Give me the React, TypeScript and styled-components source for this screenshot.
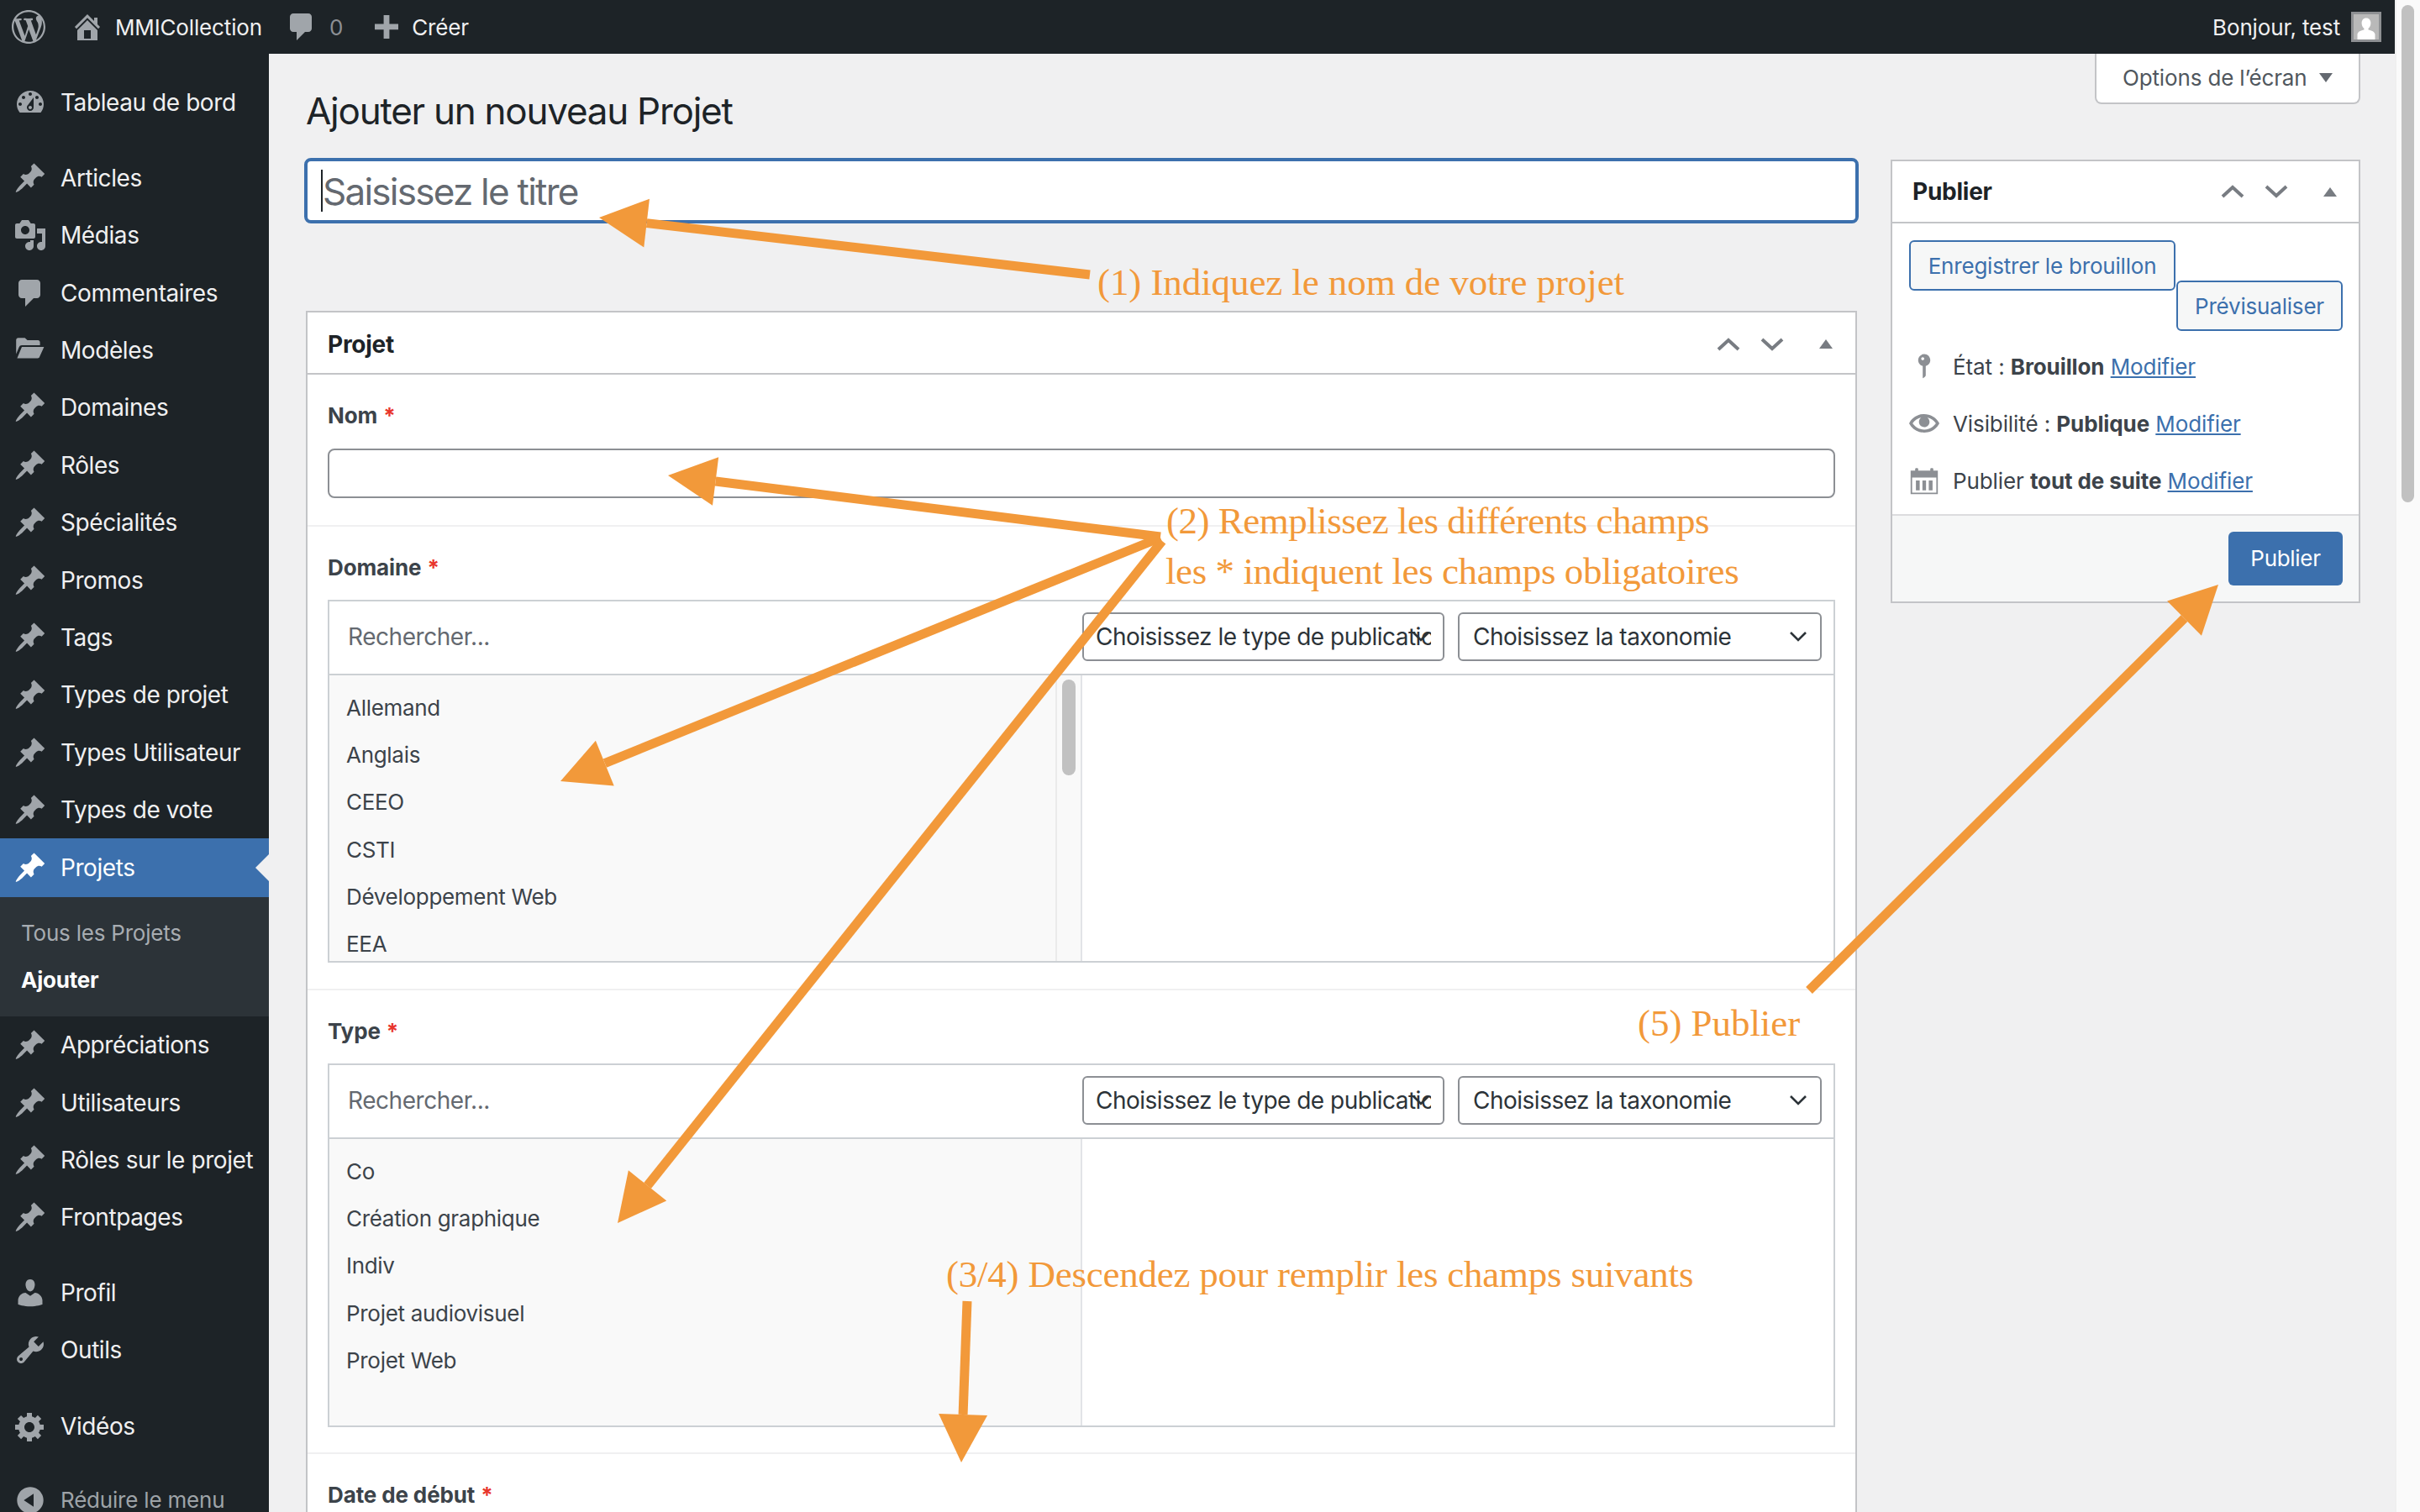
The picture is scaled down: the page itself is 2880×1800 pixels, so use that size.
import React from 'react';
import styled, { createGlobalStyle } from 'styled-components';

const ORANGE = '#f2993a';
const BLUE = '#3c70ad';
const SANS = '"Inter", "Liberation Sans", sans-serif';

const Global = createGlobalStyle`
  html, body { margin: 0; padding: 0; width: 2880px; height: 1800px; overflow: hidden; background: #f0f0f1; }
  body { font-family: ${SANS}; }
  * { box-sizing: border-box; }
`;

const P = {
  wp: 'M20 10c0-5.51-4.49-10-10-10C4.48 0 0 4.49 0 10c0 5.52 4.48 10 10 10 5.51 0 10-4.48 10-10zM7.78 15.37L4.37 6.22c.55-.02 1.17-.08 1.17-.08.5-.06.44-1.13-.06-1.11 0 0-1.45.11-2.37.11-.18 0-.37 0-.58-.01C4.12 2.69 6.87 1.11 10 1.11c2.33 0 4.45.87 6.05 2.34-.68-.11-1.65.39-1.65 1.58 0 .74.45 1.36.9 2.1.35.61.55 1.36.55 2.46 0 1.49-1.4 5-1.4 5l-3.03-8.37c.54-.02.82-.17.82-.17.5-.05.44-1.25-.06-1.22 0 0-1.44.12-2.38.12-.87 0-2.33-.12-2.33-.12-.5-.03-.56 1.2-.06 1.22l.92.08 1.26 3.41zM17.41 10c.24-.64.74-1.87.43-4.25.7 1.29 1.05 2.71 1.05 4.25 0 3.29-1.73 6.24-4.4 7.78.97-2.59 1.94-5.2 2.92-7.78zM6.1 18.09C3.12 16.65 1.11 13.53 1.11 10c0-1.3.23-2.48.72-3.59C3.25 10.3 4.67 14.2 6.1 18.09zm4.03-6.63l2.58 6.98c-.86.29-1.76.45-2.71.45-.79 0-1.57-.11-2.29-.33.81-2.38 1.62-4.74 2.42-7.1z',
  home: 'M16 8.5l1.53 1.53-1.06 1.06L10 4.62l-6.47 6.47-1.06-1.06L10 2.5l4 4v-2h2v4zm-6-2.46l6 5.99V18H4v-5.97zM12 17v-5H8v5h4z',
  comment: 'M5 2h9c1.1 0 2 .9 2 2v7c0 1.1-.9 2-2 2h-2l-5 5v-5H5c-1.1 0-2-.9-2-2V4c0-1.1.9-2 2-2z',
  plus: 'M17 8.2v3.4h-5.3V17H8.3v-5.4H3V8.2h5.3V3h3.4v5.2z',
  dashboard: 'M3.76 16h12.48c1.1-1.37 1.76-3.11 1.76-5 0-4.42-3.58-8-8-8s-8 3.58-8 8c0 1.89.66 3.63 1.76 5zM10 4c.55 0 1 .45 1 1s-.45 1-1 1-1-.45-1-1 .45-1 1-1zM6 6c.55 0 1 .45 1 1s-.45 1-1 1-1-.45-1-1 .45-1 1-1zm8 0c.55 0 1 .45 1 1s-.45 1-1 1-1-.45-1-1 .45-1 1-1zm-5.37 5.55L12 7v6c0 1.1-.9 2-2 2s-2-.9-2-2c0-.57.24-1.08.63-1.45zM4 10c.55 0 1 .45 1 1s-.45 1-1 1-1-.45-1-1 .45-1 1-1zm12 0c.55 0 1 .45 1 1s-.45 1-1 1-1-.45-1-1 .45-1 1-1zm-5 3c0-.55-.45-1-1-1s-1 .45-1 1 .45 1 1 1 1-.45 1-1z',
  pin: 'M10.44 3.02l1.82-1.82 6.36 6.35-1.83 1.82c-1.05-.68-2.48-.57-3.41.36l-.75.75c-.92.93-1.04 2.35-.35 3.41l-1.83 1.82-2.41-2.41-2.8 2.79c-.42.42-3.38 2.71-3.8 2.29s1.86-3.39 2.28-3.81l2.79-2.79L4.1 9.36l1.83-1.82c1.05.69 2.48.57 3.4-.36l.75-.75c.93-.92 1.05-2.35.36-3.41z',
  media: 'M13 11V4c0-.55-.45-1-1-1h-1.67L9 1H5L3.67 3H2c-.55 0-1 .45-1 1v7c0 .55.45 1 1 1h10c.55 0 1-.45 1-1zM7 4.5c1.38 0 2.5 1.12 2.5 2.5S8.38 9.5 7 9.5 4.5 8.38 4.5 7 5.62 4.5 7 4.5zM14 6h5v10.5c0 1.38-1.12 2.5-2.5 2.5S14 17.88 14 16.5s1.12-2.5 2.5-2.5c.17 0 .34.02.5.05V9h-3V6zm-4 8.05V13h2v3.5c0 1.38-1.12 2.5-2.5 2.5S7 17.88 7 16.5 8.12 14 9.5 14c.17 0 .34.02.5.05z',
  folder: 'M1.6 4c0-.8.5-1.4 1.3-1.4h3.9L8.3 4h6.3c.7 0 1.2.5 1.2 1.2V7H5c-.8 0-1.3.4-1.6 1L1.6 12.2zM5 8h13.2l-2.7 6c-.2.5-.6.7-1 .7H2.2z',
  user: 'M10 9.25c-2.27 0-2.73-3.44-2.73-3.44C7 4.02 7.82 2 9.97 2c2.16 0 2.98 2.02 2.71 3.81 0 0-.41 3.44-2.68 3.44zm0 2.57L12.72 10c2.39 0 4.52 2.33 4.52 4.53v2.49s-3.65 1.13-7.24 1.13c-3.65 0-7.24-1.13-7.24-1.13v-2.49c0-2.25 1.94-4.48 4.47-4.48z',
  tools: 'M16.68 9.77c-1.34 1.34-3.3 1.67-4.95.99l-5.41 6.52c-.99.99-2.59.99-3.58 0s-.99-2.59 0-3.57l6.52-5.42c-.68-1.65-.35-3.61.99-4.95 1.28-1.28 3.12-1.62 4.72-1.06l-2.89 2.89 2.82 2.82 2.86-2.87c.53 1.58.18 3.39-1.08 4.65zM3.81 16.21c.4.39 1.04.39 1.43 0 .4-.4.4-1.04 0-1.43-.39-.4-1.03-.4-1.43 0-.39.39-.39 1.03 0 1.43z',
  gear: 'M18 12h-2.18c-.17.7-.44 1.35-.81 1.93l1.54 1.54-2.1 2.1-1.54-1.54c-.58.36-1.23.63-1.91.79V19H8v-2.18c-.68-.16-1.33-.43-1.91-.79l-1.54 1.54-2.12-2.12 1.54-1.54c-.36-.58-.63-1.23-.79-1.91H1V9.03h2.17c.16-.7.44-1.35.8-1.94L2.43 5.55l2.1-2.1 1.54 1.54c.58-.37 1.24-.64 1.93-.81V2h3v2.18c.68.16 1.33.43 1.91.79l1.54-1.54 2.12 2.12-1.54 1.54c.36.59.64 1.24.8 1.94H18V12zm-8.5 1.5c1.66 0 3-1.34 3-3s-1.34-3-3-3-3 1.34-3 3 1.34 3 3 3z',
  collapse: 'M10 2.16c4.33 0 7.84 3.51 7.84 7.84s-3.51 7.84-7.84 7.84S2.16 14.33 2.16 10 5.71 2.16 10 2.16zm2 11.72V6.12L6.18 9.97z',
  key: 'M14 6c0 1.86-1.28 3.41-3 3.86V16c0 1-2 2-2 2V9.86c-1.72-.45-3-2-3-3.86 0-2.21 1.79-4 4-4s4 1.79 4 4zM8 5c0 .55.45 1 1 1s1-.45 1-1-.45-1-1-1-1 .45-1 1z',
  eye: 'M19.7 9.4C17.7 6 14 3.9 10 3.9S2.3 6 .3 9.4L0 10l.3.6c2 3.4 5.7 5.5 9.7 5.5s7.7-2.1 9.7-5.5l.3-.6-.3-.6zM10 14.1c-3.1 0-6-1.6-7.7-4.1C3.6 8 5.7 6.6 8 6.1c-.9.6-1.5 1.7-1.5 2.9 0 1.9 1.6 3.5 3.5 3.5s3.5-1.6 3.5-3.5c0-1.2-.6-2.3-1.5-2.9 2.3.5 4.4 1.9 5.7 3.9-1.7 2.5-4.6 4.1-7.7 4.1z',
  calendar: 'M1 3.5h3V2.2c0-.5 2-.5 2 0v1.3h8V2.2c0-.5 2-.5 2 0v1.3h3V19H1zM2 8v10h16V8zm2.5 2h2.5v6.5H4.5zm4.3 0h2.4v6.5H8.8zm4.2 0h2.5v6.5H13z',
};

const Glyph = styled.svg<{ $size?: number; $color?: string }>`
  width: ${(p) => p.$size ?? 40}px;
  height: ${(p) => p.$size ?? 40}px;
  fill: ${(p) => p.$color ?? '#a0a5aa'};
  flex: none;
  display: block;
`;

const Dash = ({ d, size, color }: { d: string; size?: number; color?: string }) => (
  <Glyph viewBox="0 0 20 20" $size={size} $color={color} aria-hidden="true">
    <path fillRule="evenodd" d={d} />
  </Glyph>
);

/* Shell */
const Shell = styled.div`
  position: relative;
  width: 2880px;
  height: 1800px;
  display: flex;
  overflow: hidden;
`;
const Page = styled.div`
  width: 2850px;
  height: 1800px;
  display: flex;
  flex-direction: column;
`;
const ScrollStrip = styled.div`
  width: 30px;
  height: 1800px;
  background: #fafafa;
  border-left: 2px solid #efefef;
  padding: 6px 6px 0 6px;
`;
const ScrollThumb = styled.div`
  width: 15px;
  height: 592px;
  background: #c1c1c1;
  border-radius: 8px;
`;

/* Admin bar */
const AdminBar = styled.header`
  height: 64px;
  flex: none;
  background: #1d2327;
  display: flex;
  align-items: center;
  padding: 0 16px 0 14px;
  color: #f0f0f1;
  font-size: 26px;
  letter-spacing: -0.15px;
`;
const BarGroup = styled.div<{ $left?: number; $gap?: number }>`
  display: flex;
  align-items: center;
  margin-left: ${(p) => p.$left ?? 0}px;
  gap: ${(p) => p.$gap ?? 12}px;
`;
const BarLabel = styled.span<{ $muted?: boolean }>`
  color: ${(p) => (p.$muted ? '#8c8f94' : '#f0f0f1')};
  white-space: nowrap;
`;
const BarSpacer = styled.div`
  flex: 1;
`;
const Avatar = styled.div`
  width: 36px;
  height: 36px;
  background: #b9b9b9;
  border: 3px solid #8e9093;
  overflow: hidden;
`;

/* Body */
const Body = styled.div`
  flex: 1;
  display: flex;
  min-height: 0;
`;
const Sidebar = styled.nav`
  width: 320px;
  flex: none;
  background: #1d2327;
  padding-top: 23px;
  display: flex;
  flex-direction: column;
`;
const MenuRow = styled.div<{ $active?: boolean; $gapAfter?: number; $dim?: boolean }>`
  position: relative;
  height: ${(p) => (p.$active ? 70 : 68.36)}px;
  flex: none;
  display: flex;
  align-items: center;
  padding: 1px 0 0 16px;
  gap: 16px;
  background: ${(p) => (p.$active ? BLUE : 'transparent')};
  color: ${(p) => (p.$active ? '#fff' : p.$dim ? '#9ea3a8' : '#f0f0f1')};
  font-size: ${(p) => (p.$dim ? 26 : 28)}px;
  letter-spacing: ${(p) => (p.$dim ? -0.2 : -0.42)}px;
  white-space: nowrap;
  margin-bottom: ${(p) => p.$gapAfter ?? 0}px;
`;
const ActivePointer = styled.span`
  position: absolute;
  right: 0;
  top: 19px;
  width: 0;
  height: 0;
  border-top: 16px solid transparent;
  border-bottom: 16px solid transparent;
  border-right: 16px solid #f0f0f1;
`;
const SubMenu = styled.div`
  flex: none;
  height: 142px;
  background: #2c3338;
  padding: 15px 0 13px 25px;
  display: flex;
  flex-direction: column;
`;
const SubItem = styled.div<{ $current?: boolean }>`
  height: 56px;
  display: flex;
  align-items: center;
  font-size: 26px;
  letter-spacing: -0.22px;
  font-weight: ${(p) => (p.$current ? 700 : 400)};
  color: ${(p) => (p.$current ? '#fff' : '#a7acb1')};
`;

/* Main */
const Main = styled.main`
  flex: 1;
  min-width: 0;
  background: #f0f0f1;
  padding: 0 41px 0 42px;
  overflow: hidden;
`;
const TopRow = styled.div`
  height: 124px;
  display: flex;
  justify-content: space-between;
  align-items: flex-start;
`;
const Heading = styled.h1`
  margin: 42px 0 0 2px;
  font-size: 44px;
  line-height: 52px;
  font-weight: 400;
  letter-spacing: -1.25px;
  color: #1d2327;
`;
const ScreenOptions = styled.div`
  width: 316px;
  height: 60px;
  background: #fff;
  border: 2px solid #c3c4c7;
  border-top: none;
  border-radius: 0 0 8px 8px;
  display: flex;
  align-items: center;
  padding: 0 0 2px 31px;
  gap: 14px;
  font-size: 26px;
  letter-spacing: -0.15px;
  color: #50575e;
`;
const CaretDown = styled.span`
  width: 0;
  height: 0;
  border-left: 8px solid transparent;
  border-right: 8px solid transparent;
  border-top: 11px solid #646970;
`;
const Columns = styled.div`
  display: flex;
  align-items: flex-start;
`;
const LeftColumn = styled.div`
  width: 1850px;
  flex: none;
`;
const RightColumn = styled.aside`
  width: 559px;
  flex: none;
  margin-left: 38px;
  margin-top: 2px;
`;
const TitleField = styled.div`
  height: 78px;
  background: #fff;
  border: 4px solid ${BLUE};
  border-radius: 8px;
  display: flex;
  align-items: center;
  padding-left: 16px;
  font-size: 44px;
  letter-spacing: -1.75px;
  color: #646970;
`;
const TitleText = styled.span`
  padding-top: 2px;
`;
const Caret = styled.span`
  width: 2px;
  height: 50px;
  background: #1d2327;
`;
const Box = styled.section`
  margin: 104px 2px 0;
  background: #fff;
  border: 2px solid #c3c4c7;
  border-bottom: none;
`;
const BoxHeader = styled.div<{ $height: number; $pad: number; $top?: number }>`
  height: ${(p) => p.$height}px;
  display: flex;
  align-items: center;
  justify-content: space-between;
  padding: ${(p) => p.$top ?? 0}px ${(p) => p.$pad}px 0 24px;
  border-bottom: 2px solid #c3c4c7;
`;
const BoxTitle = styled.h2`
  margin: 0;
  font-size: 28px;
  font-weight: 700;
  letter-spacing: -0.25px;
  color: #1d2327;
`;
const HandleGroup = styled.div`
  display: flex;
  align-items: center;
`;
const Handle = styled.svg<{ $mr: number }>`
  display: block;
  width: 28px;
  height: 16px;
  margin-right: ${(p) => p.$mr}px;
  stroke: #787c82;
  fill: none;
  stroke-width: 4;
`;
const HandleTri = styled.span`
  width: 0;
  height: 0;
  border-left: 8px solid transparent;
  border-right: 8px solid transparent;
  border-bottom: 11px solid #787c82;
`;
const Field = styled.div<{ $tail?: number }>`
  padding: 30px 24px ${(p) => p.$tail ?? 32}px;
  border-bottom: 2px solid #f0f0f1;
`;
const Label = styled.div`
  height: 36px;
  display: flex;
  align-items: center;
  gap: 7px;
  font-size: 26px;
  font-weight: 700;
  letter-spacing: -0.12px;
  color: #3c434a;
`;
const Star = styled.span`
  color: #e8352b;
`;
const TextInput = styled.div`
  height: 59px;
  margin-top: 22px;
  border: 2px solid #8c8f94;
  border-radius: 8px;
  background: #fff;
`;
const Relation = styled.div<{ $height: number }>`
  height: ${(p) => p.$height}px;
  margin-top: 21px;
  border: 2px solid #ccd0d4;
  display: flex;
  flex-direction: column;
`;
const RelationTop = styled.div`
  height: 90px;
  flex: none;
  margin-top: -2px;
  border-bottom: 2px solid #ccd0d4;
  display: flex;
  align-items: center;
  padding: 0 14px 0 22px;
`;
const Search = styled.div`
  flex: 1;
  font-size: 28px;
  letter-spacing: -0.45px;
  color: #646970;
`;
const Select = styled.div<{ $width: number; $mr?: number; $pl: number }>`
  position: relative;
  width: ${(p) => p.$width}px;
  margin-right: ${(p) => p.$mr ?? 0}px;
  height: 58px;
  border: 2px solid #8c8f94;
  border-radius: 6px;
  background: #fff;
  display: flex;
  align-items: center;
  padding-left: ${(p) => p.$pl}px;
  font-size: 28px;
  letter-spacing: -0.5px;
  color: #2c3338;
`;
const SelectText = styled.span<{ $clip: number }>`
  display: block;
  width: ${(p) => p.$clip}px;
  overflow: hidden;
  white-space: nowrap;
`;
const Chevron = styled.svg`
  position: absolute;
  right: 15px;
  top: 20px;
  width: 22px;
  height: 14px;
  fill: none;
  stroke: #2c3338;
  stroke-width: 2.6;
`;
const RelationBody = styled.div`
  flex: 1;
  min-height: 0;
  display: flex;
`;
const ListColumn = styled.div`
  width: 896px;
  flex: none;
  display: flex;
  background: #f9f9f9;
  border-right: 2px solid #e2e4e7;
  overflow: hidden;
`;
const ItemList = styled.div`
  flex: 1;
  padding: 10px 0 0 20px;
`;
const ListItem = styled.div`
  height: 56.3px;
  display: flex;
  align-items: center;
  font-size: 26px;
  letter-spacing: -0.3px;
  color: #3c434a;
  white-space: nowrap;
`;
const ListScroll = styled.div`
  width: 30px;
  flex: none;
  background: #f9f9f9;
  border-left: 2px solid #ebebeb;
  padding: 5px 0 0 6px;
`;
const ListThumb = styled.div`
  width: 16px;
  height: 114px;
  border-radius: 8px;
  background: #c1c1c1;
`;

/* Publish box */
const PublishBox = styled.section`
  background: #fff;
  border: 2px solid #c3c4c7;
`;
const PublishActions = styled.div`
  padding: 20px 19px 0 20px;
  display: flex;
  flex-direction: column;
  height: 128px;
`;
const OutlineButton = styled.div<{ $width: number; $end?: boolean; $over?: boolean }>`
  width: ${(p) => p.$width}px;
  height: 60px;
  flex: none;
  align-self: ${(p) => (p.$end ? 'flex-end' : 'flex-start')};
  margin-top: ${(p) => (p.$over ? -12 : 0)}px;
  border: 2px solid ${BLUE};
  border-radius: 6px;
  background: #f6f7f7;
  color: ${BLUE};
  font-size: 26px;
  letter-spacing: -0.2px;
  display: flex;
  align-items: center;
  justify-content: center;
  white-space: nowrap;
`;
const Misc = styled.div`
  padding: 8px 20px 5px;
`;
const MiscRow = styled.div`
  height: 68.2px;
  display: flex;
  align-items: center;
  gap: 16px;
  font-size: 26px;
  letter-spacing: -0.1px;
  color: #3c434a;
  white-space: nowrap;
`;
const MiscText = styled.span`
  white-space: pre;
`;
const Strong = styled.b`
  font-weight: 700;
`;
const LinkText = styled.a`
  color: ${BLUE};
  text-decoration: underline;
`;
const PublishFooter = styled.div`
  height: 104px;
  border-top: 2px solid #dcdcde;
  background: #f6f7f7;
  padding: 19px 19px 0 0;
  display: flex;
  justify-content: flex-end;
`;
const PrimaryButton = styled.div`
  width: 136px;
  height: 64px;
  border-radius: 6px;
  background: ${BLUE};
  color: #fff;
  font-size: 26px;
  letter-spacing: -0.3px;
  display: flex;
  align-items: center;
  justify-content: center;
`;

/* Annotations (painted over the screenshot) */
const Note = styled.div<{ $track: number }>`
  position: absolute;
  font-family: "Liberation Serif", "Times New Roman", serif;
  font-size: 45px;
  line-height: 50px;
  letter-spacing: ${(p) => p.$track}px;
  color: ${ORANGE};
  white-space: nowrap;
`;
const Overlay = styled.svg`
  position: absolute;
  left: 0;
  top: 0;
  width: 2880px;
  height: 1800px;
  pointer-events: none;
`;

const arrowShape = (x1: number, y1: number, x2: number, y2: number) => {
  const L = Math.hypot(x2 - x1, y2 - y1);
  const ux = (x2 - x1) / L;
  const uy = (y2 - y1) / L;
  const nx = -uy;
  const ny = ux;
  const headLen = 57;
  const headW = 29;
  const bx = x2 - ux * headLen;
  const by = y2 - uy * headLen;
  return {
    bx,
    by,
    head: `${x2},${y2} ${bx + nx * headW},${by + ny * headW} ${bx - nx * headW},${by - ny * headW}`,
  };
};

const Arrow = ({ from, to, w = 11 }: { from: [number, number]; to: [number, number]; w?: number }) => {
  const s = arrowShape(from[0], from[1], to[0], to[1]);
  return (
    <g>
      <line x1={from[0]} y1={from[1]} x2={s.bx} y2={s.by} stroke={ORANGE} strokeWidth={w} />
      <polygon points={s.head} fill={ORANGE} />
    </g>
  );
};

const menuTop: [string, string, number?][] = [
  ['Tableau de bord', P.dashboard, 22],
  ['Articles', P.pin],
  ['Médias', P.media],
  ['Commentaires', P.comment],
  ['Modèles', P.folder],
  ['Domaines', P.pin],
  ['Rôles', P.pin],
  ['Spécialités', P.pin],
  ['Promos', P.pin],
  ['Tags', P.pin],
  ['Types de projet', P.pin],
  ['Types Utilisateur', P.pin],
  ['Types de vote', P.pin],
];
const menuBottom: [string, string, number?][] = [
  ['Appréciations', P.pin],
  ['Utilisateurs', P.pin],
  ['Rôles sur le projet', P.pin],
  ['Frontpages', P.pin, 21],
  ['Profil', P.user],
  ['Outils', P.tools, 22],
  ['Vidéos', P.gear, 20],
];

const Handles = ({ first, second }: { first: number; second: number }) => (
  <HandleGroup>
    <Handle $mr={first} viewBox="0 0 28 16"><path d="M2 14 14 3l12 11" /></Handle>
    <Handle $mr={second} viewBox="0 0 28 16"><path d="M2 2 14 13 26 2" /></Handle>
    <HandleTri />
  </HandleGroup>
);

const RelationField = ({ label, items, height, scroll, tail }: { label: string; items: string[]; height: number; scroll?: boolean; tail?: number }) => (
  <Field $tail={tail}>
    <Label>{label}<Star>*</Star></Label>
    <Relation $height={height}>
      <RelationTop>
        <Search>Rechercher...</Search>
        <Select $width={431} $mr={16} $pl={14}>
          <SelectText $clip={399}>Choisissez le type de publication</SelectText>
          <Chevron viewBox="0 0 22 14"><path d="M2 2l9 9 9-9" /></Chevron>
        </Select>
        <Select $width={433} $pl={16}>
          <SelectText $clip={390}>Choisissez la taxonomie</SelectText>
          <Chevron viewBox="0 0 22 14"><path d="M2 2l9 9 9-9" /></Chevron>
        </Select>
      </RelationTop>
      <RelationBody>
        <ListColumn>
          <ItemList>
            {items.map((t) => <ListItem key={t}>{t}</ListItem>)}
          </ItemList>
          {scroll && <ListScroll><ListThumb /></ListScroll>}
        </ListColumn>
      </RelationBody>
    </Relation>
  </Field>
);

export default function App() {
  return (
    <Shell>
      <Global />
      <Page>
        <AdminBar>
          <Dash d={P.wp} />
          <BarGroup $left={30} $gap={13}>
            <Dash d={P.home} />
            <BarLabel>MMICollection</BarLabel>
          </BarGroup>
          <BarGroup $left={27} $gap={13}>
            <Dash d={P.comment} />
            <BarLabel $muted>0</BarLabel>
          </BarGroup>
          <BarGroup $left={32} $gap={10}>
            <Dash d={P.plus} />
            <BarLabel>Créer</BarLabel>
          </BarGroup>
          <BarSpacer />
          <BarGroup $gap={13}>
            <BarLabel>Bonjour, test</BarLabel>
            <Avatar>
              <Glyph viewBox="0 0 20 20" $size={30} $color="#fff" aria-hidden="true">
                <path d="M10 3c2.4 0 3.6 1.8 3.6 4 0 1.8-.8 3.4-1.9 4.2v1.1c2.4.5 5.3 1.6 5.3 3.7v4H3v-4c0-2.1 2.9-3.2 5.3-3.7v-1.1C7.2 10.4 6.4 8.8 6.4 7c0-2.2 1.2-4 3.6-4z" />
              </Glyph>
            </Avatar>
          </BarGroup>
        </AdminBar>
        <Body>
          <Sidebar>
            {menuTop.map(([t, d, g]) => (
              <MenuRow key={t} $gapAfter={g}><Dash d={d} />{t}</MenuRow>
            ))}
            <MenuRow $active><Dash d={P.pin} color="#fff" />Projets<ActivePointer /></MenuRow>
            <SubMenu>
              <SubItem>Tous les Projets</SubItem>
              <SubItem $current>Ajouter</SubItem>
            </SubMenu>
            {menuBottom.map(([t, d, g]) => (
              <MenuRow key={t} $gapAfter={g}><Dash d={d} />{t}</MenuRow>
            ))}
            <MenuRow $dim><Dash d={P.collapse} />Réduire le menu</MenuRow>
          </Sidebar>
          <Main>
            <TopRow>
              <Heading>Ajouter un nouveau Projet</Heading>
              <ScreenOptions>Options de l’écran<CaretDown /></ScreenOptions>
            </TopRow>
            <Columns>
              <LeftColumn>
                <TitleField><Caret /><TitleText>Saisissez le titre</TitleText></TitleField>
                <Box>
                  <BoxHeader $height={74} $pad={27} $top={3}>
                    <BoxTitle>Projet</BoxTitle>
                    <Handles first={24} second={42} />
                  </BoxHeader>
                  <Field>
                    <Label>Nom<Star>*</Star></Label>
                    <TextInput />
                  </Field>
                  <RelationField label="Domaine" height={432} tail={31} scroll items={['Allemand', 'Anglais', 'CEEO', 'CSTI', 'Développement Web', 'EEA']} />
                  <RelationField label="Type" height={433} tail={30} items={['Co', 'Création graphique', 'Indiv', 'Projet audiovisuel', 'Projet Web']} />
                  <Field>
                    <Label>Date de début<Star>*</Star></Label>
                  </Field>
                </Box>
              </LeftColumn>
              <RightColumn>
                <PublishBox>
                  <BoxHeader $height={74} $pad={26}>
                    <BoxTitle>Publier</BoxTitle>
                    <Handles first={24} second={42} />
                  </BoxHeader>
                  <PublishActions>
                    <OutlineButton $width={317}>Enregistrer le brouillon</OutlineButton>
                    <OutlineButton $width={198} $end $over>Prévisualiser</OutlineButton>
                  </PublishActions>
                  <Misc>
                    <MiscRow>
                      <Dash d={P.key} size={36} color="#8c8f94" />
                      <MiscText>État : <Strong>Brouillon</Strong> <LinkText>Modifier</LinkText></MiscText>
                    </MiscRow>
                    <MiscRow>
                      <Dash d={P.eye} size={36} color="#8c8f94" />
                      <MiscText>Visibilité : <Strong>Publique</Strong> <LinkText>Modifier</LinkText></MiscText>
                    </MiscRow>
                    <MiscRow>
                      <Dash d={P.calendar} size={36} color="#8c8f94" />
                      <MiscText>Publier <Strong>tout de suite</Strong> <LinkText>Modifier</LinkText></MiscText>
                    </MiscRow>
                  </Misc>
                  <PublishFooter><PrimaryButton>Publier</PrimaryButton></PublishFooter>
                </PublishBox>
              </RightColumn>
            </Columns>
          </Main>
        </Body>
      </Page>
      <ScrollStrip><ScrollThumb /></ScrollStrip>
      <Overlay viewBox="0 0 2880 1800" aria-hidden="true">
        <Arrow from={[1297, 327]} to={[713, 259]} />
        <Arrow from={[1381, 639]} to={[795, 566]} />
        <Arrow from={[1381, 640]} to={[667, 930]} />
        <Arrow from={[1383, 644]} to={[735, 1456]} />
        <Arrow from={[2153, 1179]} to={[2640, 696]} />
        <Arrow from={[1151, 1549]} to={[1144, 1741]} />
      </Overlay>
      <Note $track={-0.08} style={{ left: 1306, top: 311 }}>(1) Indiquez le nom de votre projet</Note>
      <Note $track={-0.5} style={{ left: 1388, top: 595 }}>(2) Remplissez les différents champs</Note>
      <Note $track={-0.42} style={{ left: 1387, top: 655 }}>les * indiquent les champs obligatoires</Note>
      <Note $track={-0.05} style={{ left: 1949, top: 1193 }}>(5) Publier</Note>
      <Note $track={-0.22} style={{ left: 1126, top: 1492 }}>(3/4) Descendez pour remplir les champs suivants</Note>
    </Shell>
  );
}
